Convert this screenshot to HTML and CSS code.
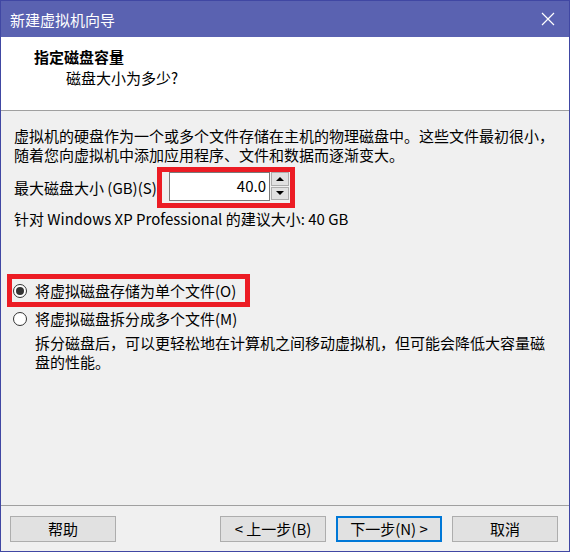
FILE: index.html
```html
<!DOCTYPE html>
<html lang="zh-CN">
<head>
<meta charset="utf-8">
<title>新建虚拟机向导</title>
<link rel="stylesheet" href="styles.css">
</head>
<body>
<div class="window">
  <div class="titlebar">
    <span class="title">新建虚拟机向导</span>
    <svg class="close" width="14" height="14" viewBox="0 0 14 14"><path d="M1 1 L13 13 M13 1 L1 13" stroke="#fff" stroke-width="1.2" fill="none"/></svg>
  </div>
  <div class="header">
    <div class="h-title">指定磁盘容量</div>
    <div class="h-sub">磁盘大小为多少?</div>
  </div>
  <div class="content">
    <p class="desc">虚拟机的硬盘作为一个或多个文件存储在主机的物理磁盘中。这些文件最初很小，<br>随着您向虚拟机中添加应用程序、文件和数据而逐渐变大。</p>
    <div class="size-row">
      <span class="label">最大磁盘大小 (GB)(S):</span>
      <div class="highlight spin-wrap">
        <div class="spin-input">40.0</div>
        <div class="spin-btns">
          <div class="spin-btn"><span class="arrow-up"></span></div>
          <div class="spin-btn"><span class="arrow-down"></span></div>
        </div>
      </div>
    </div>
    <p class="recommend">针对 Windows XP Professional 的建议大小: 40 GB</p>
    <div class="highlight radio-hl">
      <div class="radio"><span class="dot checked"></span><span>将虚拟磁盘存储为单个文件(O)</span></div>
    </div>
    <div class="radio radio2"><span class="dot"></span><span>将虚拟磁盘拆分成多个文件(M)</span></div>
    <p class="note">拆分磁盘后，可以更轻松地在计算机之间移动虚拟机，但可能会降低大容量磁<br>盘的性能。</p>
  </div>
  <div class="footer">
    <button class="btn">帮助</button>
    <button class="btn btn-back">&lt; 上一步(B)</button>
    <button class="btn btn-default">下一步(N) &gt;</button>
    <button class="btn">取消</button>
  </div>
</div>
</body>
</html>
```
FILE: styles.css
```css
* { box-sizing: border-box; }
html, body { margin: 0; padding: 0; }
body {
  font-family: "Noto Sans CJK SC", "Noto Sans", sans-serif;
  font-size: 15px;
  color: #000;
  background: #f0f0f0;
}
.window {
  width: 570px;
  height: 552px;
  border: 1px solid #4047a3;
  display: flex;
  flex-direction: column;
  background: #f0f0f0;
}
.titlebar {
  height: 36px;
  background: #5a62b1;
  display: flex;
  align-items: center;
  justify-content: space-between;
  padding: 2px 14px 0 9px;
  flex: none;
}
.title {
  color: #fff;
  font-size: 15px;
  line-height: 20px;
}
.close { display: block; margin-top: -2px; }
.header {
  height: 74px;
  background: #fff;
  border-bottom: 1px solid #a0a0a0;
  padding: 10px 0 0 33px;
  flex: none;
}
.h-title {
  font-weight: bold;
  line-height: 20px;
}
.h-sub {
  line-height: 21px;
  padding-left: 32px;
}
.content {
  flex: 1;
  padding: 15px 0 0 13px;
}
.desc {
  margin: 0;
  line-height: 19px;
  white-space: nowrap;
}
.size-row {
  display: flex;
  align-items: center;
  margin-top: 3px;
}
.label {
  width: 143px;
  line-height: 19px;
  white-space: nowrap;
}
.highlight {
  border: 5px solid #ec1c24;
}
.spin-wrap {
  display: flex;
  padding: 0 0 2px 7px;
}
.spin-input {
  width: 101px;
  height: 29px;
  background: #fff;
  border: 1px solid #7a7a7a;
  border-top-color: #7a7a7a;
  text-align: right;
  padding-right: 3px;
  line-height: 26px;
}
.spin-btns {
  width: 20px;
  display: flex;
  flex-direction: column;
  gap: 1px;
  padding: 0 1px 1px 1px;
}
.spin-btn {
  flex: 1;
  background: #e1e1e1;
  border: 1px solid #adadad;
  display: flex;
  align-items: center;
  justify-content: center;
}
.arrow-up {
  width: 0; height: 0;
  border-left: 4px solid transparent;
  border-right: 4px solid transparent;
  border-bottom: 4px solid #000;
}
.arrow-down {
  width: 0; height: 0;
  border-left: 4px solid transparent;
  border-right: 4px solid transparent;
  border-top: 4px solid #000;
}
.recommend {
  margin: 1px 0 0 0;
  line-height: 19px;
  white-space: nowrap;
}
.radio-hl {
  margin: 46px 0 0 -7px;
  width: 243px;
  height: 33px;
  padding-left: 1px;
  display: flex;
  align-items: center;
}
.radio {
  display: flex;
  align-items: center;
  gap: 8px;
  line-height: 19px;
  white-space: nowrap;
}
.radio2 {
  margin: 2px 0 0 -1px;
}
.dot {
  width: 14px;
  height: 14px;
  border: 1px solid #333;
  border-radius: 50%;
  background: #fff;
  flex: none;
  position: relative;
}
.dot.checked::after {
  content: "";
  position: absolute;
  left: 2px;
  top: 2px;
  width: 8px;
  height: 8px;
  border-radius: 50%;
  background: #333;
}
.note {
  margin: 5px 0 0 21px;
  line-height: 19px;
  white-space: nowrap;
}
.footer {
  flex: none;
  border-top: 1px solid #a0a0a0;
  padding: 10px 10px 9px 9px;
  display: flex;
  gap: 10px;
}
.btn {
  width: 106px;
  height: 26px;
  background: #e1e1e1;
  border: 1px solid #adadad;
  font-family: inherit;
  font-size: 15px;
  color: #000;
  padding: 0;
  line-height: 22px;
}
.btn-back { margin-left: auto; margin-left: 94px; }
.btn-default {
  border: 2px solid #0078d7;
}
```
